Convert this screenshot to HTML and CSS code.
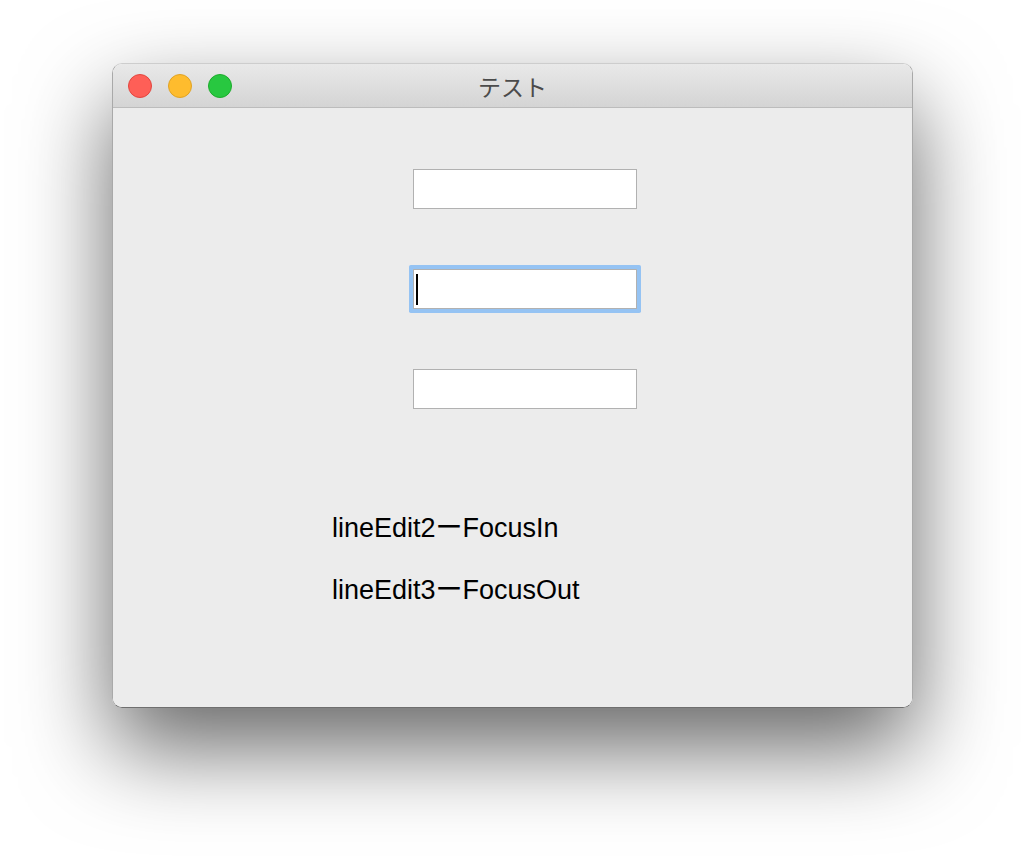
FILE: index.html
```html
<!DOCTYPE html>
<html lang="ja">
<head>
    <meta charset="UTF-8">
    <meta name="viewport" content="width=device-width, initial-scale=1.0">
    <title>テスト</title>
    <link rel="stylesheet" href="styles.css">
</head>
<body>

    <div class="window">
        <div class="titlebar">
            <div class="lights">
                <span class="light close"></span>
                <span class="light minimize"></span>
                <span class="light zoom"></span>
            </div>
            <div class="title">テスト</div>
            <div></div>
        </div>

        <div class="content">
            <div class="fields">
                <div class="line-edit"></div>
                <div class="line-edit focused"><span class="caret"></span></div>
                <div class="line-edit"></div>
            </div>

            <div class="labels">
                <p>lineEdit2ーFocusIn</p>
                <p>lineEdit3ーFocusOut</p>
            </div>
        </div>
    </div>

</body>
</html>
```

FILE: styles.css
```css
* {
    margin: 0;
    padding: 0;
    box-sizing: border-box;
}

body {
    width: 1024px;
    height: 868px;
    background: #ffffff;
    font-family: "Liberation Sans", "Noto Sans CJK JP", sans-serif;
    overflow: hidden;
}

.window {
    width: 801px;
    height: 645px;
    margin: 63px 0 0 112px;
    display: flex;
    flex-direction: column;
    border: 1px solid #a9a9a9;
    border-top-color: #cdcdcd;
    border-bottom-color: #6f6f6f;
    border-radius: 10px;
    overflow: hidden;
    box-shadow: 0 40px 90px rgba(0, 0, 0, 0.6);
}

.titlebar {
    height: 44px;
    display: grid;
    grid-template-columns: 1fr auto 1fr;
    align-items: center;
    background: linear-gradient(#e9e9e9, #d4d4d4);
    border-bottom: 1px solid #bcbcbc;
}

.lights {
    display: flex;
    gap: 16px;
    padding-left: 15px;
}

.light {
    width: 24px;
    height: 24px;
    border-radius: 50%;
    border: 1px solid;
}

.close {
    background: #fe5f57;
    border-color: #e2463f;
}

.minimize {
    background: #febc2e;
    border-color: #e0a324;
}

.zoom {
    background: #28c840;
    border-color: #1dac2c;
}

.title {
    font-family: "Noto Sans CJK JP", sans-serif;
    font-size: 23px;
    color: #4b4b4b;
}

.content {
    flex: 1;
    background: #ececec;
    padding-top: 61px;
}

.fields {
    display: flex;
    flex-direction: column;
    gap: 60px;
    margin-left: 300px;
}

.line-edit {
    width: 224px;
    height: 40px;
    background: #ffffff;
    border: 1px solid #b1b1b1;
    display: flex;
    align-items: flex-start;
    padding: 4px 0 0 2px;
}

.line-edit.focused {
    border-radius: 0.5px;
    box-shadow: 0 0 0 4px #95c3f3;
}

.caret {
    width: 2px;
    height: 31px;
    background: #000000;
}

.labels {
    margin: 104px 0 0 219px;
    display: flex;
    flex-direction: column;
    gap: 32px;
}

.labels p {
    font-size: 27px;
    line-height: 30px;
    color: #000000;
}
```
